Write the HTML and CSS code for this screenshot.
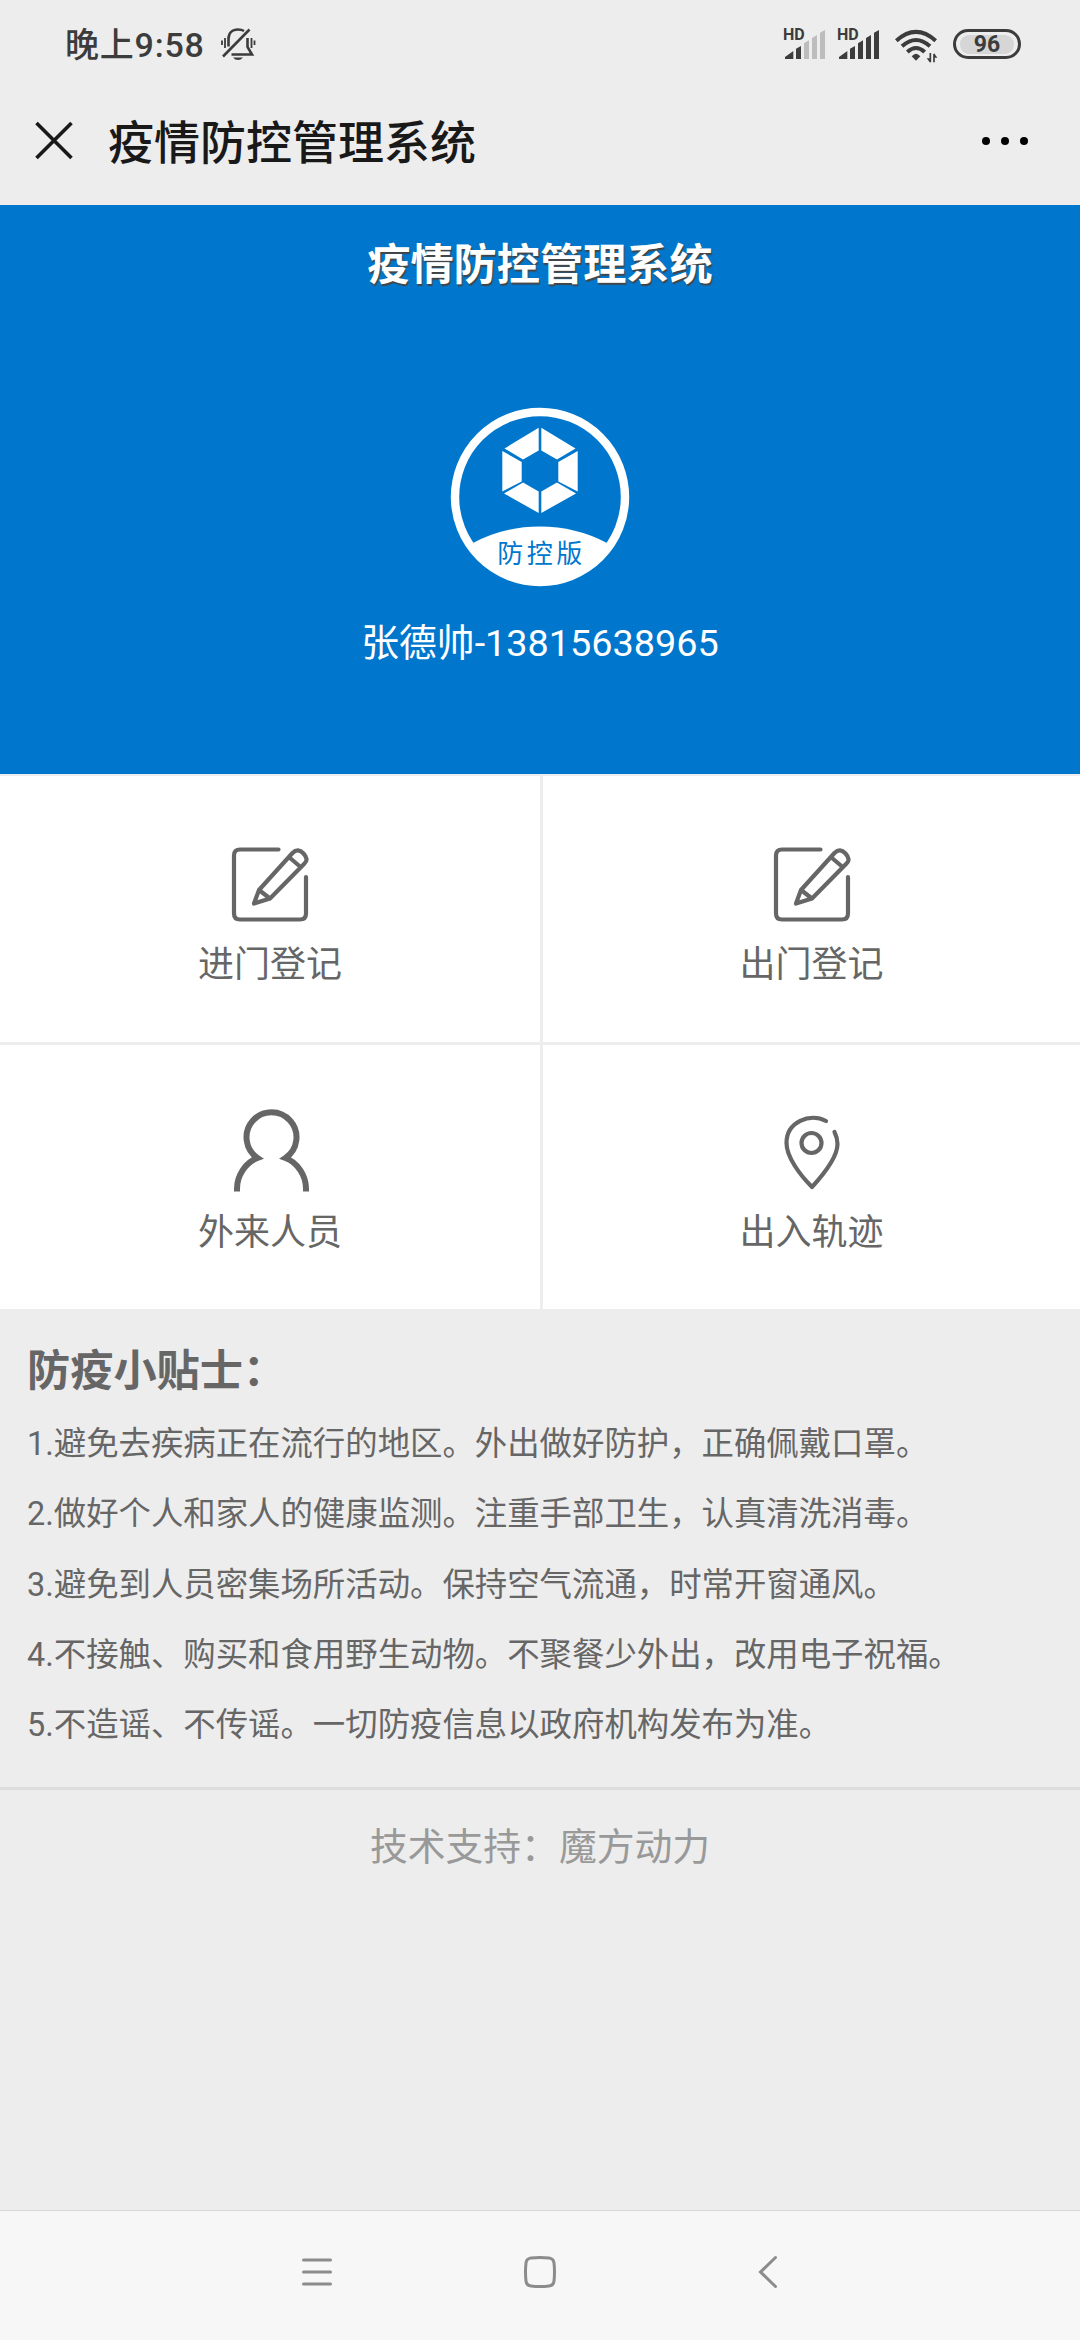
FILE: index.html
```html
<!DOCTYPE html>
<html lang="zh-CN">
<head>
<meta charset="utf-8">
<title>疫情防控管理系统</title>
<link rel="stylesheet" href="styles.css">
</head>
<body>
<div class="status">
  <span class="time">晚上9:58</span>
  <svg class="bell" viewBox="0 0 36 36" width="36" height="36" fill="none" stroke="#3c3c3c" stroke-width="2.6">
    <path d="M8.500 20.500V13C8.500 7 12.500 3.500 18 3.500C20.500 3.500 22.500 4 24 5M27.500 12V21L32 28.500H11.500"/>
    <path d="M3 30.500L29.500 3.500"/>
    <path d="M13 31.500H23Q21 34 18 34T13 31.500Z" fill="#3c3c3c" stroke="none"/>
    <path d="M2 14.500V19M5 12V22M31.500 12V22M34.500 14.500V19" stroke-width="1.800"/>
  </svg>
  <div class="radios">
    <div class="signal">
      <span class="hd">HD</span>
      <svg viewBox="72 84 126 93" width="42" height="31" fill="#3c3c3c">
        <path d="M72 174V168L97 150V174ZM105 174V143L120 135V174Z"/>
        <path fill="#bdbdbd" d="M129 174V127L144 118V174ZM153 174V111L168 102V174ZM177 174V95L192 87V174Z"/>
      </svg>
    </div>
    <div class="signal">
      <span class="hd">HD</span>
      <svg viewBox="72 84 126 93" width="42" height="31" fill="#3c3c3c">
        <path d="M72 174V168L97 150V174ZM105 174V143L120 135V174ZM129 174V127L144 118V174ZM153 174V111L168 102V174ZM177 174V95L192 87V174Z"/>
      </svg>
    </div>
    <svg class="wifi" viewBox="402 84 129 105" width="43" height="35" fill="none" stroke="#3c3c3c" stroke-width="12">
      <path d="M406 119Q465 66 524 119M423 136Q465 98 507 136M439 153Q465 129 491 153"/>
      <path d="M452 166Q465 151 478 166L465 179Z" fill="#3c3c3c" stroke="none"/>
      <path d="M508 156V183M519 184V159" stroke-width="5"/>
      <path d="M497 172H508V186ZM519 156L529 170H519Z" fill="#3c3c3c" stroke="none"/>
    </svg>
    <div class="battery"><span class="level">96</span></div>
  </div>
</div>
<div class="titlebar">
  <svg viewBox="0 0 40 40" width="40" height="40" fill="none" stroke="#191919" stroke-width="3.600"><path d="M2.500 2L37.500 37M37.500 2L2.500 37"/></svg>
  <span class="page-title">疫情防控管理系统</span>
  <svg class="more" viewBox="0 0 46 8" width="46" height="8"><circle cx="4" cy="4" r="4"/><circle cx="23" cy="4" r="4"/><circle cx="42" cy="4" r="4"/></svg>
</div>
<header class="banner">
  <h1>疫情防控管理系统</h1>
  <svg class="logo" viewBox="0 0 180 180" width="180" height="180">
    <circle cx="90" cy="90" r="85" fill="none" stroke="#fff" stroke-width="8.400"/>
    <path fill="#fff" d="M23 136Q54 119.500 90 119.500T157 136A77 77 0 0 1 23 136Z"/>
    <g fill="#fff">
      <path d="M88.700 20.700V43.500L73 52.500L54.500 41.500Z"/>
      <path d="M91.300 20.700V43.500L107 52.500L125.500 41.500Z"/>
      <path d="M52.300 44L71.700 55V74.500L52.300 84.500Z"/>
      <path d="M127.700 44L108.300 55V74.500L127.700 84.500Z"/>
      <path d="M54 86.500L73 75.500L88.700 84.500V106Z"/>
      <path d="M126 86.500L107 75.500L91.300 84.500V106Z"/>
    </g>
    <text class="logo-text" x="91.500" y="156" text-anchor="middle">防控版</text>
  </svg>
  <p class="user">张德帅-13815638965</p>
</header>
<main class="grid">
  <a class="cell">
    <svg class="icon" viewBox="0 0 80 80" width="80" height="80" fill="none" stroke="#666" stroke-width="4.200" stroke-linecap="round" stroke-linejoin="round">
      <path d="M48.500 4.500H10Q4 4.500 4 10.500V68.500Q4 74.500 10 74.500H70Q76 74.500 76 68.500V32"/>
      <path d="M24 58.500L29 45L62.500 8Q68 2.500 73.500 8.500T74.500 18.500L40 53.500ZM29 45L40 53.500M60 13L70 21.500"/>
    </svg>
    <span>进门登记</span>
  </a>
  <a class="cell">
    <svg class="icon" viewBox="0 0 80 80" width="80" height="80" fill="none" stroke="#666" stroke-width="4.200" stroke-linecap="round" stroke-linejoin="round">
      <path d="M48.500 4.500H10Q4 4.500 4 10.500V68.500Q4 74.500 10 74.500H70Q76 74.500 76 68.500V32"/>
      <path d="M24 58.500L29 45L62.500 8Q68 2.500 73.500 8.500T74.500 18.500L40 53.500ZM29 45L40 53.500M60 13L70 21.500"/>
    </svg>
    <span>出门登记</span>
  </a>
  <a class="cell lower">
    <svg class="icon" viewBox="-1.500 1.500 80 80" width="80" height="80" fill="none" stroke="#666" stroke-width="6">
      <path d="M5.500 80V77C5.500 64 14 51 26 46.500A25 25 0 1 1 54 46.500C66 51 74.500 64 74.500 77V80" stroke-miterlimit="8"/>
    </svg>
    <span>外来人员</span>
  </a>
  <a class="cell lower">
    <svg class="icon" viewBox="0 2 80 80" width="80" height="80" fill="none" stroke="#666" stroke-width="4.200" stroke-linecap="round" stroke-linejoin="round">
      <path d="M54 10C38 1.500 14.500 11 14.500 32C14.500 46 28 64 40 76C51 64 65.500 46 65.500 33Q65.500 27 62.500 21"/>
      <circle cx="39.500" cy="32" r="10"/>
    </svg>
    <span>出入轨迹</span>
  </a>
</main>
<section class="tips">
  <h2>防疫小贴士：</h2>
  <p>1.避免去疾病正在流行的地区。外出做好防护，正确佩戴口罩。</p>
  <p>2.做好个人和家人的健康监测。注重手部卫生，认真清洗消毒。</p>
  <p>3.避免到人员密集场所活动。保持空气流通，时常开窗通风。</p>
  <p>4.不接触、购买和食用野生动物。不聚餐少外出，改用电子祝福。</p>
  <p>5.不造谣、不传谣。一切防疫信息以政府机构发布为准。</p>
</section>
<footer class="support">技术支持：魔方动力</footer>
<nav class="sysnav">
  <svg viewBox="0 0 34 34" width="34" height="34" fill="none" stroke="#8c8c8c" stroke-width="3" stroke-linecap="round"><path d="M3.500 5H30.500M3.500 17H30.500M3.500 29H30.500"/></svg>
  <svg class="home" viewBox="0 0 34 34" width="34" height="34" fill="none" stroke="#8c8c8c" stroke-width="3"><path d="M8 3Q17 1.800 26 3Q30.500 3.500 31 8Q32 17 31 26Q30.500 30.500 26 31Q17 32.200 8 31Q3.500 30.500 3 26Q2 17 3 8Q3.500 3.500 8 3Z"/></svg>
  <svg viewBox="0 0 34 34" width="34" height="34" fill="none" stroke="#8c8c8c" stroke-width="3" stroke-linecap="round"><path d="M24.500 2.500L9.500 17L24.500 31.500"/></svg>
</nav>
</body>
</html>
```
FILE: styles.css
```css
* {
  box-sizing: border-box;
}

body {
  margin: 0;
  width: 1080px;
  height: 2340px;
  display: flex;
  flex-direction: column;
  background: #ededed;
  color: #666;
  font-family: Roboto, "Noto Sans CJK SC", sans-serif;
}

h1, h2, p {
  margin: 0;
}

svg {
  display: block;
  flex: none;
}

.status {
  height: 88px;
  padding: 0 59px 0 65px;
  display: flex;
  align-items: center;
  color: #3c3c3c;
}

.time {
  padding-top: 1px;
  font-size: 34px;
  font-weight: 500;
  line-height: 48px;
  white-space: nowrap;
  letter-spacing: 0.8px;
}

.bell {
  margin-left: 15px;
}

.radios {
  margin-left: auto;
  display: flex;
  align-items: center;
}

.signal {
  position: relative;
  width: 54px;
}

.hd {
  position: absolute;
  left: -2px;
  top: -2px;
  font: bold 16px/16px Roboto, sans-serif;
}

.wifi {
  margin: 4px 15px 0 2px;
}

.battery {
  width: 68px;
  height: 30px;
  padding: 3px 4px;
  border: 3px solid #3c3c3c;
  border-radius: 15px;
}

.level {
  display: block;
  border-radius: 9px;
  background: #d6d6d6;
  font-size: 23px;
  font-weight: 700;
  line-height: 19px;
  text-align: center;
}

.titlebar {
  height: 117px;
  padding: 0 52px 11px 34px;
  display: flex;
  align-items: center;
  color: #191919;
}

.page-title {
  margin-left: 34px;
  padding-bottom: 4px;
  font-size: 46px;
  font-weight: 500;
}

.more {
  margin-left: auto;
}

.banner {
  height: 569px;
  padding-top: 29px;
  display: flex;
  flex-direction: column;
  align-items: center;
  background: #0077cd;
  color: #fff;
}

h1 {
  font-size: 43.2px;
  line-height: 64px;
  text-shadow: 1px 2px 1px #444;
}

.logo {
  margin-top: 109px;
}

.logo-text {
  font-size: 26px;
  letter-spacing: 3.5px;
  fill: #0077cd;
}

.user {
  margin-top: 28px;
  font-size: 37.8px;
  line-height: 56px;
}

.grid {
  height: 535px;
  padding-top: 2px;
  display: grid;
  grid-template-columns: 540px 537px;
  grid-template-rows: 266px 264px;
  gap: 3px;
  background: #ededed;
}

.cell {
  padding-top: 69px;
  display: flex;
  flex-direction: column;
  align-items: center;
  background: #fff;
  font-size: 36px;
  line-height: 52px;
}

.lower {
  padding-top: 68px;
}

.icon {
  margin-bottom: 14px;
  overflow: visible;
}

.tips {
  height: 481px;
  padding: 31px 27px 0;
  border-bottom: 3px solid #ddd;
}

h2 {
  font-size: 43.2px;
  line-height: 64px;
  margin-bottom: 5px;
}

.tips p {
  font-size: 32.4px;
  line-height: 70.3px;
  white-space: nowrap;
}

.support {
  flex: 1;
  padding-top: 29px;
  color: #999;
  font-size: 37.8px;
  line-height: 56px;
  text-align: center;
}

.sysnav {
  height: 130px;
  padding: 0 295px 8px 300px;
  display: flex;
  align-items: center;
  justify-content: space-between;
  background: #f7f7f7;
  border-top: 1px solid #d9d9d9;
}

.home {
  margin-right: 5px;
}
```
